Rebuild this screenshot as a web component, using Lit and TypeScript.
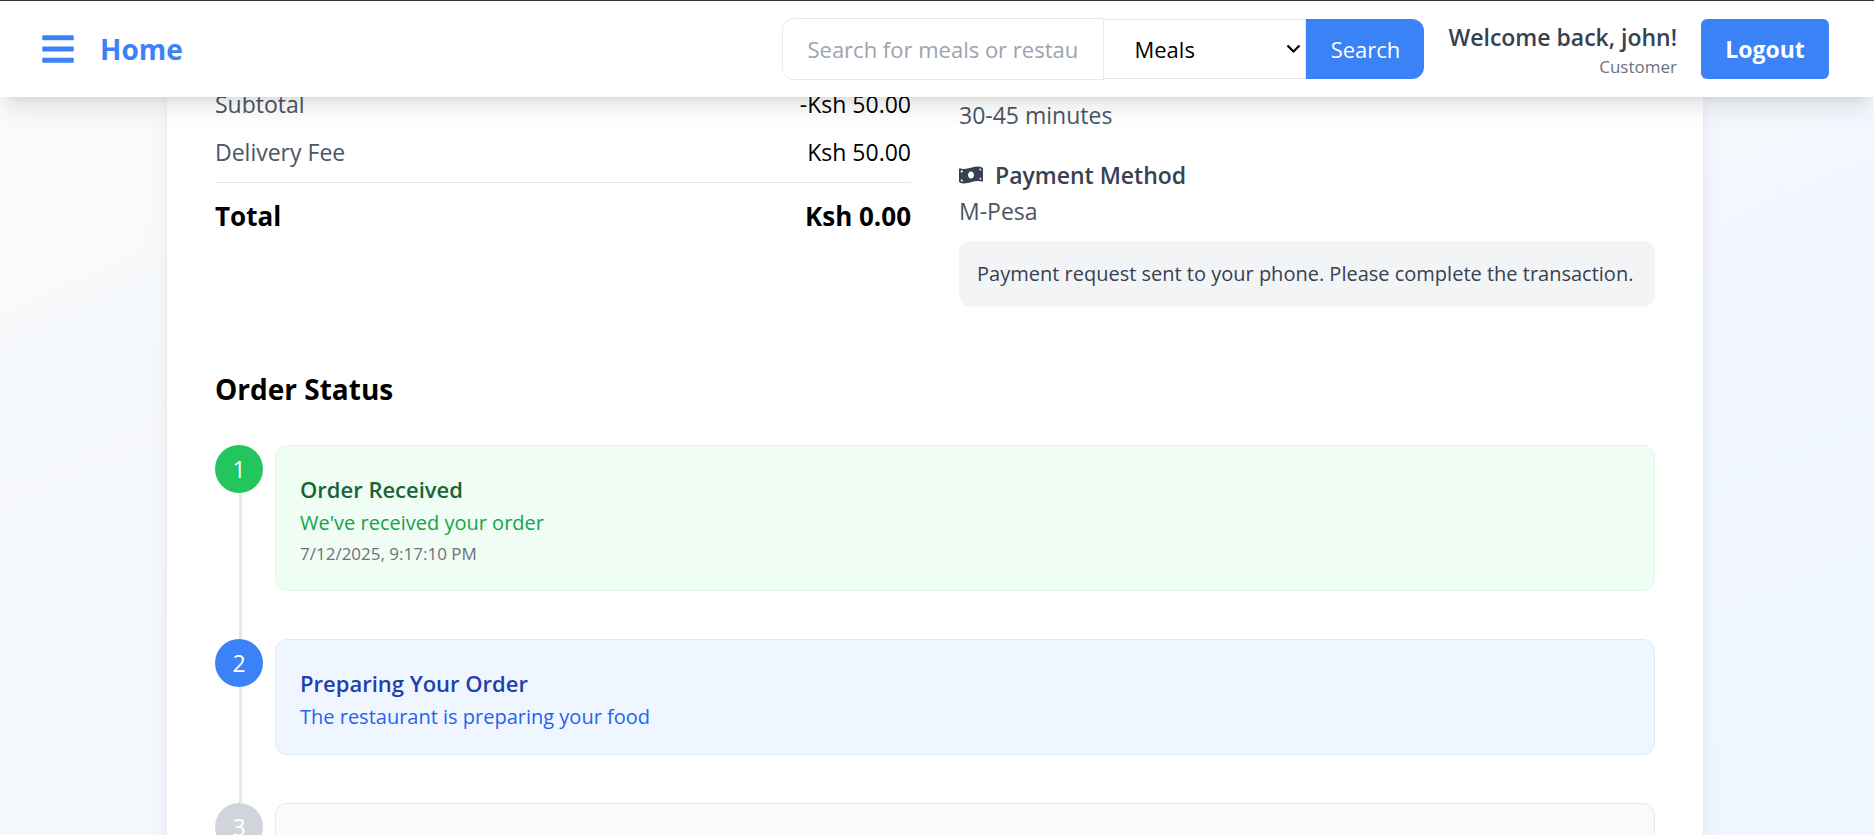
import { LitElement, html, css, nothing } from "lit";
import { customElement, state } from "lit/decorators.js";

interface Step {
  tone: "done" | "active" | "pending";
  title?: string;
  note?: string;
  time?: string;
}

const STEPS: Step[] = [
  {
    tone: "done",
    title: "Order Received",
    note: "We've received your order",
    time: "7/12/2025, 9:17:10 PM",
  },
  {
    tone: "active",
    title: "Preparing Your Order",
    note: "The restaurant is preparing your food",
  },
  { tone: "pending" },
];

const FONT = css`"Segoe UI", "Open Sans", "Noto Sans", sans-serif`;

@customElement("site-header")
class SiteHeader extends LitElement {
  @state() scope = "Meals";

  static styles = css`
    :host {
      display: block;
      position: relative;
      z-index: 1;
      background: #fff;
      border-top: 1px solid #333236;
      box-shadow: 0 15px 23px -5px rgb(0 0 0 / 0.1), 0 6px 9px -6px rgb(0 0 0 / 0.1);
      font-family: ${FONT};
    }
    * {
      box-sizing: border-box;
    }
    .bar {
      display: flex;
      align-items: center;
      justify-content: space-between;
      height: 96px;
      padding: 0 45px 0 42px;
    }
    .brand,
    .tools,
    .search {
      display: flex;
      align-items: center;
    }
    .brand {
      gap: 26px;
    }
    .tools {
      gap: 24px;
    }
    button,
    input,
    select {
      font: inherit;
      margin: 0;
    }
    .menu {
      display: flex;
      padding: 0;
      border: 0;
      background: none;
      color: #3b82f6;
      cursor: pointer;
    }
    .home {
      color: #3b82f6;
      font-size: 28px;
      font-weight: 700;
      line-height: 42px;
      text-decoration: none;
    }
    .search {
      font-size: 22px;
      line-height: 36px;
    }
    .query {
      width: 322px;
      height: 62px;
      padding: 0 24px;
      border: 1px solid #e5e7eb;
      border-radius: 12px 0 0 12px;
      background: #fff;
      outline: none;
    }
    .query::placeholder {
      color: #9ca3af;
    }
    .scope {
      display: grid;
      align-items: center;
      width: 202px;
    }
    .scope select,
    .scope svg {
      grid-area: 1 / 1;
    }
    .scope select {
      appearance: none;
      width: 100%;
      height: 60px;
      padding: 0 30px;
      border: 1px solid #e5e7eb;
      border-left: 0;
      border-radius: 0;
      background: #fff;
      color: #000;
    }
    .scope svg {
      justify-self: end;
      margin-right: 5px;
      pointer-events: none;
    }
    .go,
    .logout {
      height: 60px;
      border: 0;
      padding: 0;
      background: #3b82f6;
      color: #fff;
      cursor: pointer;
    }
    .go {
      width: 118px;
      border-radius: 0 12px 12px 0;
    }
    .logout {
      width: 128px;
      border-radius: 6px;
      font-size: 23px;
      font-weight: 700;
      line-height: 36px;
    }
    .user {
      text-align: right;
    }
    .hello {
      color: #374151;
      font-size: 23px;
      font-weight: 600;
      line-height: 36px;
    }
    .role {
      color: #6b7280;
      font-size: 17px;
      line-height: 24px;
    }
  `;

  render() {
    return html`
      <header class="bar">
        <div class="brand">
          <button class="menu" aria-label="Menu">
            <svg width="32" height="36" viewBox="0 0 448 512" fill="currentColor" aria-hidden="true">
              <path
                d="M16 132h416c8.837 0 16-7.163 16-16V76c0-8.837-7.163-16-16-16H16C7.163 60 0 67.163 0 76v40c0 8.837 7.163 16 16 16zm0 160h416c8.837 0 16-7.163 16-16v-40c0-8.837-7.163-16-16-16H16c-8.837 0-16 7.163-16 16v40c0 8.837 7.163 16 16 16zm0 160h416c8.837 0 16-7.163 16-16v-40c0-8.837-7.163-16-16-16H16c-8.837 0-16 7.163-16 16v40c0 8.837 7.163 16 16 16z"
              />
            </svg>
          </button>
          <a class="home" href="#">Home</a>
        </div>
        <div class="tools">
          <form class="search" @submit=${(e: Event) => e.preventDefault()}>
            <input
              class="query"
              type="text"
              aria-label="Search"
              placeholder="Search for meals or restaurants"
            />
            <div class="scope">
              <select
                aria-label="Search in"
                @change=${(e: Event) => (this.scope = (e.target as HTMLSelectElement).value)}
              >
                <option>${this.scope}</option>
              </select>
              <svg width="15" height="10" viewBox="0 0 15 10" fill="none" aria-hidden="true">
                <path d="M1.5 1.5 7.5 7.5 13.5 1.5" stroke="#000" stroke-width="2.2" />
              </svg>
            </div>
            <button class="go">Search</button>
          </form>
          <div class="user">
            <div class="hello">Welcome back, john!</div>
            <div class="role">Customer</div>
          </div>
          <button class="logout">Logout</button>
        </div>
      </header>
    `;
  }
}

@customElement("order-timeline")
class OrderTimeline extends LitElement {
  static styles = css`
    :host {
      display: block;
    }
    * {
      box-sizing: border-box;
    }
    .steps {
      list-style: none;
      margin: 0;
      padding: 0;
    }
    .step {
      display: grid;
      grid-template-columns: 48px 1fr;
      column-gap: 12px;
    }
    .rail {
      display: flex;
      flex-direction: column;
      align-items: center;
    }
    .dot {
      display: grid;
      place-items: center;
      flex: none;
      width: 48px;
      height: 48px;
      border-radius: 50%;
      color: #fff;
      font-size: 23px;
      line-height: 36px;
    }
    .line {
      flex: 1;
      width: 3px;
      margin-left: 3px;
      background: #e5e7eb;
    }
    .panel {
      min-height: 116px;
      margin-bottom: 48px;
      padding: 24px;
      border: 1px solid;
      border-radius: 12px;
    }
    .title,
    .note,
    .time {
      margin: 0;
    }
    .title {
      font-size: 22px;
      font-weight: 600;
      line-height: 38px;
    }
    .note {
      font-size: 20px;
      line-height: 30px;
    }
    .time {
      margin-top: 4px;
      color: #6b7280;
      font-size: 17px;
      line-height: 24px;
    }
    .panel {
      padding-bottom: 22px;
    }
    .done .dot {
      background: #22c55e;
    }
    .done .panel {
      padding-bottom: 24px;
      background: #f0fdf4;
      border-color: #dcfce7;
    }
    .done .title {
      color: #166534;
    }
    .done .note {
      color: #16a34a;
    }
    .active .dot {
      background: #3b82f6;
    }
    .active .panel {
      background: #eff6ff;
      border-color: #dbeafe;
    }
    .active .title {
      color: #1e40af;
    }
    .active .note {
      color: #2563eb;
    }
    .pending .dot {
      background: #d1d5db;
    }
    .pending .panel {
      background: #f9fafb;
      border-color: #e5e7eb;
    }
  `;

  render() {
    return html`
      <ol class="steps">
        ${STEPS.map(
          (s, i) => html`
            <li class="step ${s.tone}">
              <div class="rail">
                <span class="dot">${i + 1}</span>
                <span class="line"></span>
              </div>
              <div class="panel">
                ${s.title ? html`<h3 class="title">${s.title}</h3>` : nothing}
                ${s.note ? html`<p class="note">${s.note}</p>` : nothing}
                ${s.time ? html`<p class="time">${s.time}</p>` : nothing}
              </div>
            </li>
          `
        )}
      </ol>
    `;
  }
}

@customElement("app-root")
class AppRoot extends LitElement {
  static styles = css`
    :host {
      display: block;
      height: 100vh;
      overflow: hidden;
      background: linear-gradient(to bottom right, #f9fafb, #eff6ff);
      font-family: ${FONT};
      color: #000;
    }
    * {
      box-sizing: border-box;
    }
    .page {
      margin-top: -11px;
      padding-right: 4px;
    }
    .card {
      max-width: 1536px;
      margin: 0 auto;
      padding: 0 48px;
      background: #fff;
      box-shadow: 0 15px 23px -5px rgb(0 0 0 / 0.1), 0 6px 9px -6px rgb(0 0 0 / 0.1);
    }
    .columns {
      display: grid;
      grid-template-columns: 1fr 1fr;
      gap: 48px;
    }
    .costs,
    .costs dt,
    .costs dd,
    p,
    h2,
    h3 {
      margin: 0;
    }
    .row {
      display: flex;
      justify-content: space-between;
      margin-bottom: 12px;
      font-size: 23px;
      line-height: 36px;
    }
    .row dt {
      color: #4b5563;
    }
    .total {
      display: flex;
      justify-content: space-between;
      padding-top: 12px;
      border-top: 1px solid #e5e7eb;
      font-size: 26px;
      font-weight: 700;
      line-height: 42px;
    }
    .details {
      padding-top: 11px;
      color: #4b5563;
      font-size: 23px;
      line-height: 36px;
    }
    .method {
      display: flex;
      align-items: center;
      gap: 12px;
      margin-top: 24px;
      color: #374151;
      font-size: 23px;
      font-weight: 600;
    }
    .notice {
      margin-top: 12px;
      padding: 18px;
      border-radius: 12px;
      background: #f3f4f6;
      color: #374151;
      font-size: 20px;
      line-height: 30px;
    }
    .heading {
      margin: 60px 0 34px;
      font-size: 28px;
      font-weight: 700;
      line-height: 44px;
    }
  `;

  render() {
    return html`
      <site-header></site-header>
      <main class="page">
        <div class="card">
          <div class="columns">
            <dl class="costs">
              <div class="row"><dt>Subtotal</dt><dd>-Ksh 50.00</dd></div>
              <div class="row"><dt>Delivery Fee</dt><dd>Ksh 50.00</dd></div>
              <div class="total"><dt>Total</dt><dd>Ksh 0.00</dd></div>
            </dl>
            <section class="details">
              <p>30-45 minutes</p>
              <h3 class="method">
                <svg width="24" height="24" viewBox="0 0 640 512" fill="currentColor" aria-hidden="true">
                  <path
                    d="M621.16 54.46C582.37 38.19 543.55 32 504.75 32c-123.17-.01-246.33 62.34-369.5 62.34-30.89 0-61.76-3.92-92.65-13.72-3.47-1.1-6.95-1.62-10.35-1.62C15.04 79 0 92.32 0 110.81v317.26c0 12.63 7.23 24.6 18.84 29.46C57.63 473.81 96.45 480 135.25 480c123.17 0 246.34-62.35 369.51-62.35 30.89 0 61.76 3.92 92.65 13.72 3.47 1.1 6.95 1.62 10.35 1.62 17.21 0 32.25-13.32 32.25-31.81V83.93c-.01-12.64-7.24-24.6-18.85-29.47zM48 132.22c20.12 5.04 41.12 7.57 62.72 8.93C104.84 170.54 79 192.69 48 192.69v-60.47zm0 285v-47.78c34.37 0 62.18 27.27 63.71 61.4-22.53-1.81-43.59-6.31-63.71-13.62zM320 352c-44.19 0-80-42.99-80-96 0-53.02 35.82-96 80-96s80 42.98 80 96c0 53.03-35.83 96-80 96zm272 27.78c-17.52-4.39-35.71-6.85-54.32-8.44 5.87-26.08 27.5-45.88 54.32-49.28v57.72zm0-236.11c-30.89-3.91-54.86-29.7-55.81-61.55 19.54 2.17 38.09 6.23 55.81 12.8v48.75z"
                  />
                </svg>
                Payment Method
              </h3>
              <p>M-Pesa</p>
              <p class="notice">
                Payment request sent to your phone. Please complete the transaction.
              </p>
            </section>
          </div>
          <h2 class="heading">Order Status</h2>
          <order-timeline></order-timeline>
        </div>
      </main>
    `;
  }
}
